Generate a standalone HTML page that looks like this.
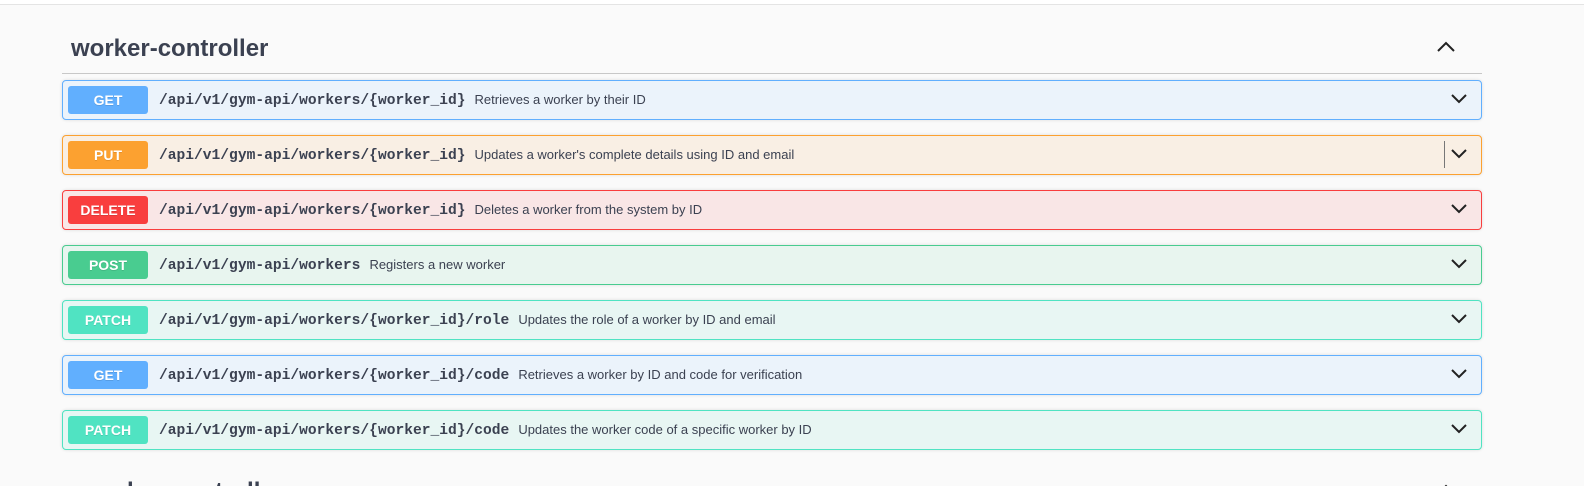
<!DOCTYPE html>
<html><head><meta charset="utf-8"><style>
*{margin:0;padding:0;box-sizing:border-box}
html,body{width:1584px;height:486px;overflow:hidden}
body{background:#fafafa;position:relative;font-family:"Liberation Sans",sans-serif;color:#3b4151}
.top{position:absolute;left:0;top:0;width:1584px;height:5px;background:#fff;border-bottom:1px solid #e4e4e4}
h2{position:absolute;left:71px;font-size:24px;font-weight:bold;color:#3b4151;line-height:1}
.hl{position:absolute;left:62px;width:1420px;top:73px;height:1px;background:#c8c8c8}
.row{position:absolute;left:62px;width:1420px;height:40px;border:1px solid;border-radius:4px;box-shadow:0 0 3px rgba(0,0,0,.12)}
.b{position:absolute;left:5px;top:5px;width:80px;height:28px;border-radius:3px;color:#fff;font-weight:bold;font-size:14px;text-align:center;line-height:28px;text-shadow:0 1px 0 rgba(0,0,0,.1)}
.p{position:absolute;left:96px;top:0;line-height:38px;font-family:"Liberation Mono",monospace;font-weight:bold;font-size:14.6px;color:#3b4151;white-space:nowrap}
.p span{font-family:"Liberation Sans",sans-serif;font-weight:normal;font-size:13px;margin-left:9px}
.c{position:absolute;left:1387px;top:12px}
.get{background:#ebf3fb;border-color:#61affe}.get .b{background:#61affe}
.put{background:#f9efe4;border-color:#fca130}.put .b{background:#fca130}
.del{background:#f9e6e6;border-color:#f93e3e}.del .b{background:#f93e3e}
.post{background:#e8f5ef;border-color:#49cc90}.post .b{background:#49cc90}
.patch{background:#e8f6f3;border-color:#50e3c2}.patch .b{background:#50e3c2}
</style></head><body>
<div class="top"></div>
<h2 style="top:37px">worker-controller</h2>
<svg style="position:absolute;left:1436px;top:41px" width="20" height="12"><path d="M2 10 L10 2 L18 10" fill="none" stroke="#222" stroke-width="2"/></svg>
<div class="hl"></div>

<div class="row get" style="top:80px"><div class="b">GET</div><div class="p">/api/v1/gym-api/workers/{worker_id}<span>Retrieves a worker by their ID</span></div><svg class="c" width="18" height="12"><path d="M2 2 L9 9 L16 2" fill="none" stroke="#222" stroke-width="2"/></svg></div>

<div class="row put" style="top:135px"><div class="b">PUT</div><div class="p">/api/v1/gym-api/workers/{worker_id}<span>Updates a worker's complete details using ID and email</span></div><div style="position:absolute;left:1381px;top:5px;width:1px;height:27px;background:#777"></div><svg class="c" width="18" height="12"><path d="M2 2 L9 9 L16 2" fill="none" stroke="#222" stroke-width="2"/></svg></div>

<div class="row del" style="top:190px"><div class="b">DELETE</div><div class="p">/api/v1/gym-api/workers/{worker_id}<span>Deletes a worker from the system by ID</span></div><svg class="c" width="18" height="12"><path d="M2 2 L9 9 L16 2" fill="none" stroke="#222" stroke-width="2"/></svg></div>

<div class="row post" style="top:245px"><div class="b">POST</div><div class="p">/api/v1/gym-api/workers<span>Registers a new worker</span></div><svg class="c" width="18" height="12"><path d="M2 2 L9 9 L16 2" fill="none" stroke="#222" stroke-width="2"/></svg></div>

<div class="row patch" style="top:300px"><div class="b">PATCH</div><div class="p">/api/v1/gym-api/workers/{worker_id}/role<span>Updates the role of a worker by ID and email</span></div><svg class="c" width="18" height="12"><path d="M2 2 L9 9 L16 2" fill="none" stroke="#222" stroke-width="2"/></svg></div>

<div class="row get" style="top:355px"><div class="b">GET</div><div class="p">/api/v1/gym-api/workers/{worker_id}/code<span>Retrieves a worker by ID and code for verification</span></div><svg class="c" width="18" height="12"><path d="M2 2 L9 9 L16 2" fill="none" stroke="#222" stroke-width="2"/></svg></div>

<div class="row patch" style="top:410px"><div class="b">PATCH</div><div class="p">/api/v1/gym-api/workers/{worker_id}/code<span>Updates the worker code of a specific worker by ID</span></div><svg class="c" width="18" height="12"><path d="M2 2 L9 9 L16 2" fill="none" stroke="#222" stroke-width="2"/></svg></div>

<h2 style="top:480px">member-controller</h2>
<svg style="position:absolute;left:1436px;top:484px" width="20" height="12"><path d="M2 10 L10 2 L18 10" fill="none" stroke="#222" stroke-width="2"/></svg>
</body></html>
